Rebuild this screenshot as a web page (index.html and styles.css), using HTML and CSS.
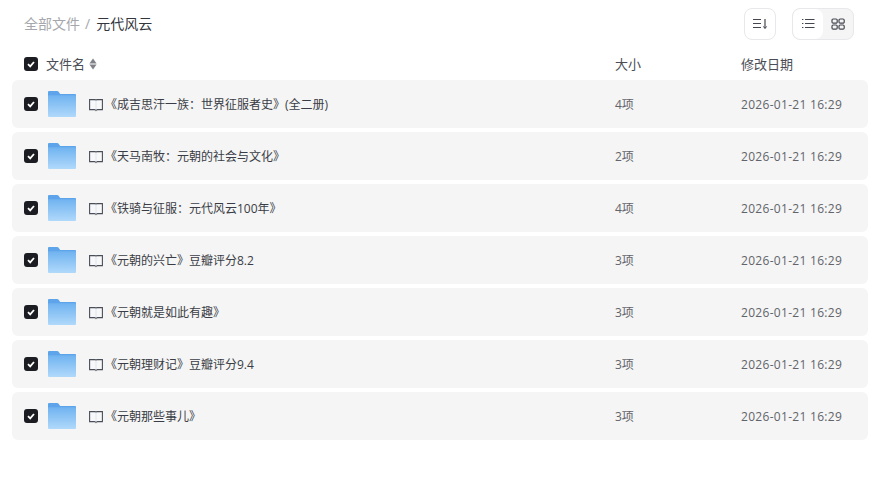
FILE: index.html
```html
<!DOCTYPE html>
<html lang="zh-CN">
<head>
    <meta charset="UTF-8">
    <meta name="viewport" content="width=device-width, initial-scale=1.0">
    <title>元代风云</title>
    <link rel="stylesheet" href="styles.css">
</head>
<body>
    <div class="toolbar">
        <div class="crumbs">
            <span class="crumb-root">全部文件</span>
            <span class="crumb-sep">/</span>
            <span class="crumb-current">元代风云</span>
        </div>
        <div class="tools">
            <button class="sort-button">
                <svg width="16" height="16" viewBox="0 0 16 16" fill="none" stroke="#44474f" stroke-width="1.2">
                    <path d="M1 3.5h8M1 7.5h8M1 11.5h8"/>
                    <path d="M13 3v9"/>
                    <path d="M11.4 10.4l1.6 2.2 1.6-2.2" stroke-width="1"/>
                </svg>
            </button>
            <div class="view-switch">
                <button class="view-button active">
                    <svg width="16" height="16" viewBox="0 0 16 16" fill="none" stroke="#44474f" stroke-width="1.2">
                        <path d="M5 3.5h9.5M5 7.5h9.5M5 11.5h9.5"/>
                        <path d="M2 3.5h1.4M2 7.5h1.4M2 11.5h1.4"/>
                    </svg>
                </button>
                <button class="view-button">
                    <svg width="16" height="16" viewBox="0 0 16 16" fill="none" stroke="#44474f" stroke-width="1.2">
                        <rect x="2" y="3" width="5.2" height="4.2" rx="1.2"/>
                        <rect x="9" y="3" width="5.2" height="4.2" rx="1.2"/>
                        <rect x="2" y="9" width="5.2" height="4.2" rx="1.2"/>
                        <rect x="9" y="9" width="5.2" height="4.2" rx="1.2"/>
                    </svg>
                </button>
            </div>
        </div>
    </div>

    <div class="table-head">
        <div class="col-name">
            <span class="checkbox"><svg width="10" height="10" viewBox="0 0 10 10" fill="none" stroke="#fff" stroke-width="1.8"><path d="M2 5.2l2.2 2.2L8 3"/></svg></span>
            <span class="head-name">文件名</span>
            <svg class="sort-arrows" width="8" height="12" viewBox="0 0 8 12" fill="#808287"><path d="M4 .6l3.6 4.8H.4z"/><path d="M4 11.4L.4 6.6h7.2z"/></svg>
        </div>
        <div class="col-size">大小</div>
        <div class="col-date">修改日期</div>
    </div>

    <div class="rows" id="rows"></div>

    <template id="row-template">
        <div class="row">
            <div class="col-name">
                <span class="checkbox"><svg width="10" height="10" viewBox="0 0 10 10" fill="none" stroke="#fff" stroke-width="1.8"><path d="M2 5.2l2.2 2.2L8 3"/></svg></span>
                <svg class="folder" width="30" height="30" viewBox="0 0 30 30">
                    <path d="M2 3.2C2 2.5 2.5 2 3.2 2h8c.5 0 .9.2 1.2.6L14.2 5H29c.6 0 1 .4 1 1v3H2z" fill="#5ea4ea"/>
                    <rect x="2" y="6.2" width="28" height="21.8" rx="1" fill="url(#folderFill)"/>
                </svg>
                <svg class="book" width="16" height="16" viewBox="0 0 16 16" fill="#f7f8fa" stroke="#4a4e59" stroke-width="1.1">
                    <path d="M1.6 3.6h4.9c.8 0 1.5.3 1.5.9 0-.6.7-.9 1.5-.9h4.9v10H9.5c-.7 0-1.3.2-1.5.6-.2-.4-.8-.6-1.5-.6H1.6z"/>
                    <path d="M8 4.5v9.5" stroke="#dcdee2" stroke-width="0.8"/>
                </svg>
                <span class="file-name"></span>
            </div>
            <div class="col-size"></div>
            <div class="col-date">2026-01-21 16:29</div>
        </div>
    </template>

    <svg width="0" height="0" class="defs">
        <defs>
            <linearGradient id="folderFill" x1="0" y1="0" x2="0" y2="1">
                <stop offset="0" stop-color="#6fb2f0"/>
                <stop offset="1" stop-color="#b0d9fb"/>
            </linearGradient>
        </defs>
    </svg>

    <script>
        var files = [
            ['《成吉思汗一族：世界征服者史》(全二册)', '4项'],
            ['《天马南牧：元朝的社会与文化》', '2项'],
            ['《铁骑与征服：元代风云100年》', '4项'],
            ['《元朝的兴亡》豆瓣评分8.2', '3项'],
            ['《元朝就是如此有趣》', '3项'],
            ['《元朝理财记》豆瓣评分9.4', '3项'],
            ['《元朝那些事儿》', '3项']
        ];
        var rows = document.getElementById('rows');
        var template = document.getElementById('row-template');
        files.forEach(function (file) {
            var row = template.content.cloneNode(true);
            row.querySelector('.file-name').textContent = file[0];
            row.querySelector('.col-size').textContent = file[1];
            rows.appendChild(row);
        });
    </script>
</body>
</html>
```

FILE: styles.css
```css
* {
    box-sizing: border-box;
}

body {
    margin: 0;
    padding: 8px 10px 0 12px;
    background-color: #fff;
    color: #3a3d45;
    font-family: "Open Sans", "Noto Sans CJK SC", sans-serif;
    font-size: 13px;
}

button {
    display: flex;
    align-items: center;
    justify-content: center;
    padding: 0;
    border: none;
    background: none;
    cursor: pointer;
}

.defs {
    position: absolute;
}

.toolbar {
    display: flex;
    justify-content: space-between;
    align-items: center;
    height: 32px;
    padding: 0 14px 0 12px;
}

.crumbs {
    display: flex;
    align-items: center;
    margin-bottom: 2px;
    font-size: 14px;
}

.crumb-root {
    color: #a5a7ac;
}

.crumb-sep {
    margin: 0 6px 0 5px;
    color: #a5a7ac;
}

.crumb-current {
    color: #33363d;
}

.tools {
    display: flex;
    gap: 16px;
}

.sort-button {
    width: 32px;
    height: 32px;
    border: 1px solid #e8e8ea;
    border-radius: 8px;
    background-color: #fff;
}

.view-switch {
    display: flex;
    width: 62px;
    height: 32px;
    border: 1px solid #e8e8ea;
    border-radius: 8px;
    background-color: #f5f5f6;
    overflow: hidden;
}

.view-button {
    flex: 1;
}

.view-button.active {
    background-color: #fff;
    border-radius: 8px;
}

.table-head,
.row {
    display: flex;
    align-items: center;
    padding-left: 12px;
}

.table-head {
    height: 40px;
    padding-top: 6px;
    color: #4a4d55;
}

.table-head .checkbox {
    margin-top: 2px;
}

.col-name {
    display: flex;
    align-items: center;
    flex: 1;
    min-width: 0;
}

.col-size {
    width: 127px;
    padding-left: 1px;
}

.col-date {
    width: 127px;
}

.checkbox {
    display: flex;
    align-items: center;
    justify-content: center;
    flex-shrink: 0;
    width: 14px;
    height: 14px;
    border-radius: 3px;
    background-color: #1c1d22;
}

.head-name {
    margin-left: 8px;
}

.sort-arrows {
    margin: 2px 0 0 4px;
}

.rows {
    display: flex;
    flex-direction: column;
    gap: 4px;
}

.row {
    height: 48px;
    border-radius: 6px;
    background-color: #f5f5f5;
    font-size: 12px;
}

.folder {
    flex-shrink: 0;
    margin-left: 8px;
}

.book {
    flex-shrink: 0;
    margin: 0 1px 0 12px;
}

.file-name {
    color: #3a3d45;
}

.row .col-size,
.row .col-date {
    color: #62646a;
}

.row .col-date {
    letter-spacing: 0.3px;
}
```
